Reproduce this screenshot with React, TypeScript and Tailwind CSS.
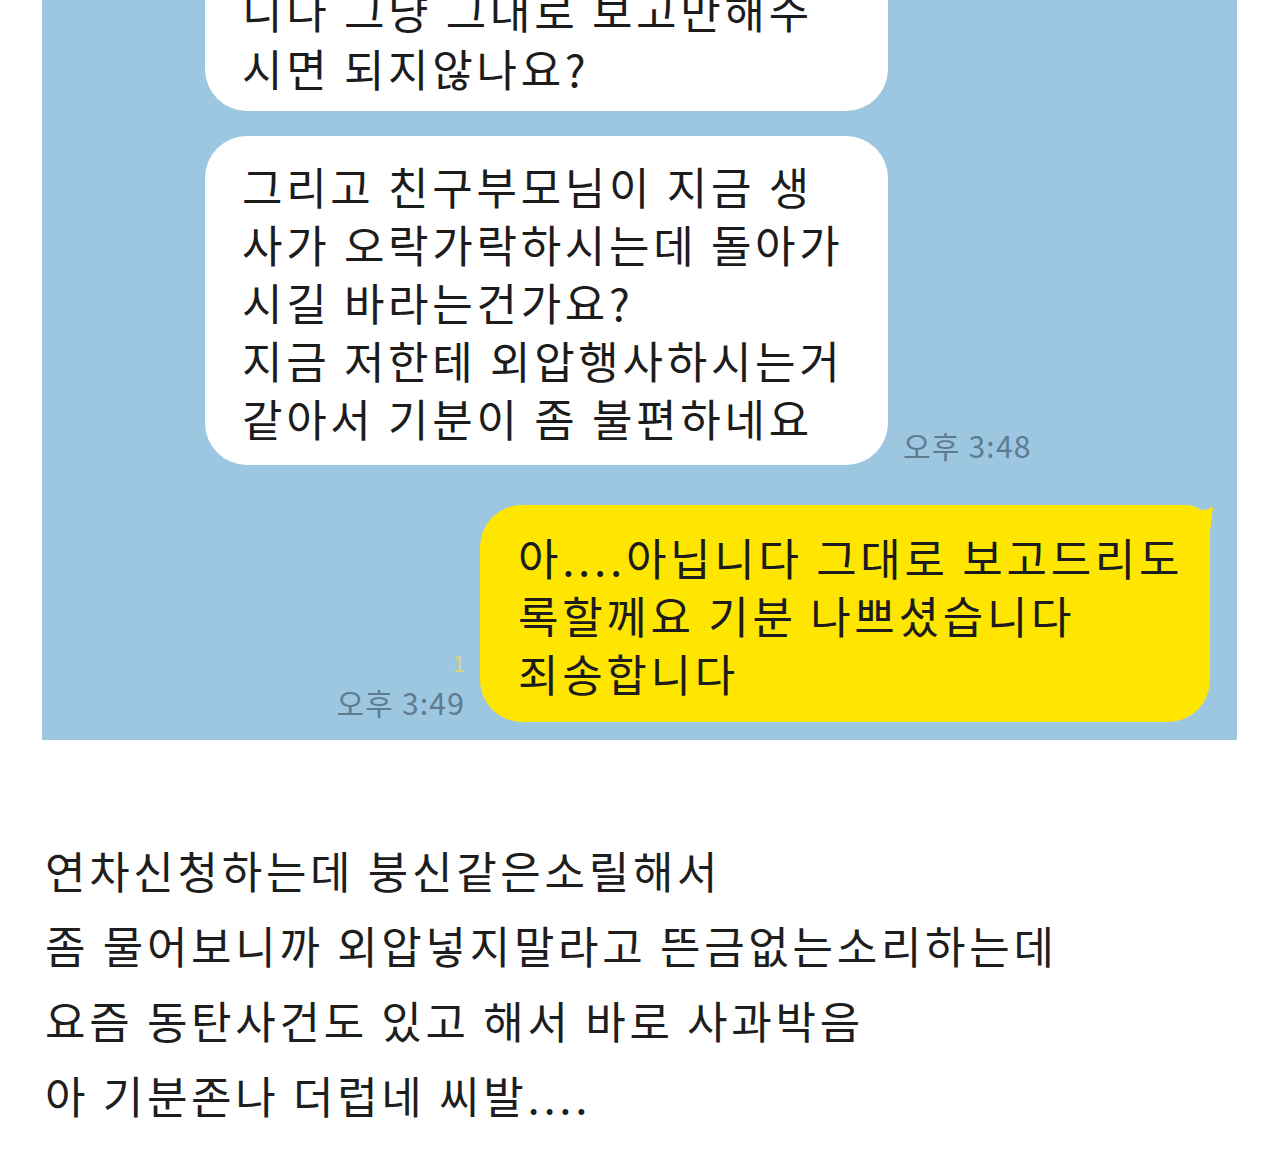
import React from "react";

// small pointed corner of the outgoing (yellow) bubble
function Tail() {
  return (
    <svg
      className="absolute right-[-4px] top-0"
      width="30"
      height="26"
      viewBox="0 0 30 26"
    >
      <path d="M0 0 Q16 9 29 2 L26 26 L0 26 Z" fill="#ffe600" />
    </svg>
  );
}

export default function App() {
  return (
    <div className="min-h-[1152px] overflow-hidden bg-white font-['Noto_Sans_CJK_KR','Noto_Sans',sans-serif] text-[#1c1c1c]">
      <div className="-mt-[41px] ml-[42px] w-[1195px] bg-[#9dc6e0] pb-[18px]">
        {/* earlier incoming message */}
        <div className="ml-[163px] w-[683px] rounded-[42px] bg-white pb-[14px] pl-[37px] pt-[22px] text-[44px] leading-[58px] tracking-[3.7px]">
          니다 그냥 그대로 보고만해주
          <br />
          시면 되지않나요?
        </div>

        {/* incoming message with time */}
        <div className="ml-[163px] mt-[25px] flex items-end">
          <div className="w-[683px] rounded-[42px] bg-white pb-[18px] pl-[37px] pt-[21px] text-[44px] leading-[58px] tracking-[3.7px]">
            그리고 친구부모님이 지금 생
            <br />
            사가 오락가락하시는데 돌아가
            <br />
            시길 바라는건가요?
            <br />
            지금 저한테 외압행사하시는거
            <br />
            같아서 기분이 좀 불편하네요
          </div>
          <div className="mb-[2px] ml-[15px] text-[30px] leading-[36px] tracking-[1.2px] text-[#5e7b90]">
            오후 3:48
          </div>
        </div>

        {/* outgoing message */}
        <div className="mt-[40px] flex items-end justify-end pr-[27px]">
          <div className="mb-[2px] mr-[15px] flex flex-col items-end">
            <span className="mb-[10px] text-[22px] leading-[24px] text-[#dcd778]">1</span>
            <span className="text-[30px] leading-[36px] tracking-[1.2px] text-[#5e7b90]">오후 3:49</span>
          </div>
          <div className="relative w-[730px] rounded-[42px] rounded-tr-[24px] bg-[#ffe600] pb-[20px] pl-[38px] pt-[23px] text-[44px] leading-[58px] tracking-[3.7px]">
            <Tail />
            <span className="relative">
              아....아닙니다 그대로 보고드리도
              <br />
              록할께요 기분 나쁘셨습니다
              <br />
              죄송합니다
            </span>
          </div>
        </div>
      </div>

      <div className="pl-[45px] pt-[93px] text-[44px] leading-[75px] tracking-[3.7px] text-[#1e1e1e]">
        <p>연차신청하는데 붕신같은소릴해서</p>
        <p>좀 물어보니까 외압넣지말라고 뜬금없는소리하는데</p>
        <p>요즘 동탄사건도 있고 해서 바로 사과박음</p>
        <p>아 기분존나 더럽네 씨발....</p>
      </div>
    </div>
  );
}
